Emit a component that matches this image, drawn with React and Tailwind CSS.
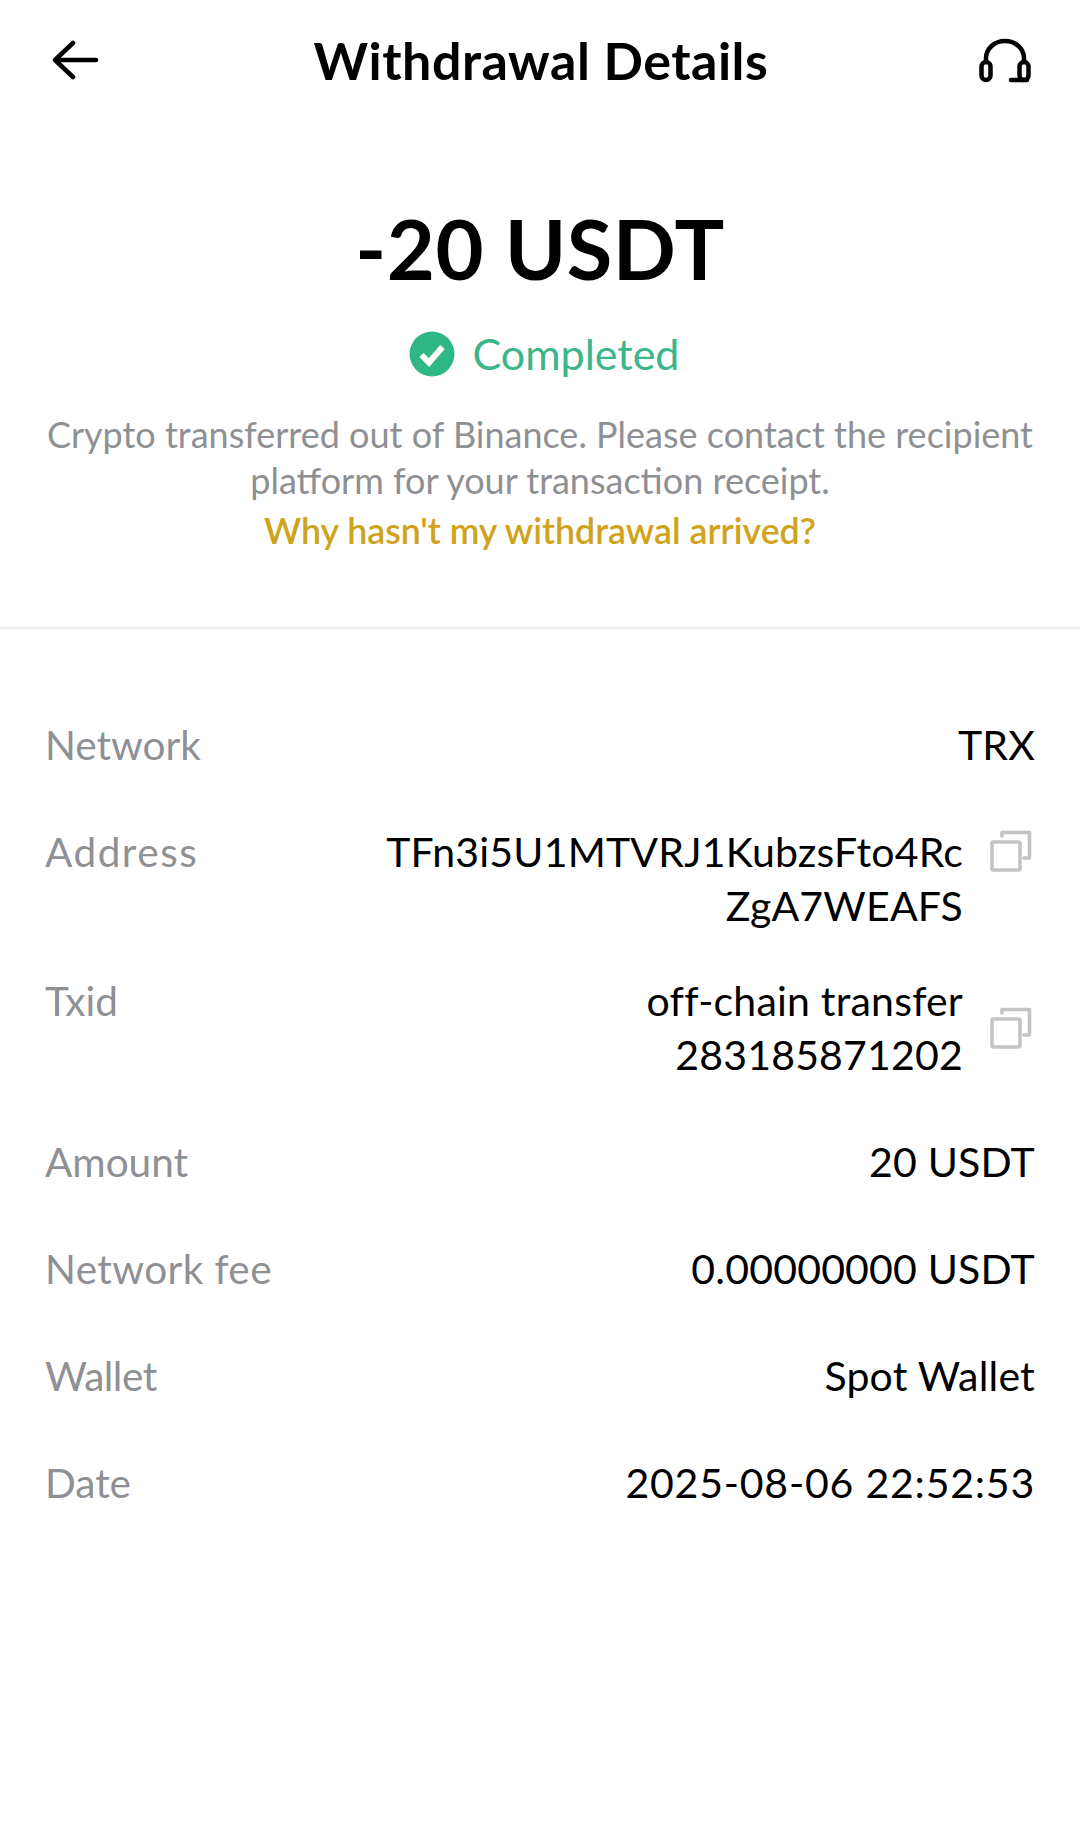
const rows = [
  { label: "Network", lines: ["TRX"] },
  { label: "Address", labelClass: "tracking-[1.5px]", lines: ["TFn3i5U1MTVRJ1KubzsFto4Rc", "ZgA7WEAFS"], copy: true, tight: true },
  { label: "Txid", lines: ["off-chain transfer", "283185871202"], copy: true, center: true },
  { label: "Amount", lines: ["20 USDT"] },
  { label: "Network fee", labelClass: "tracking-[0.4px]", lines: ["0.00000000 USDT"] },
  { label: "Wallet", labelClass: "-tracking-[0.5px]", lines: ["Spot Wallet"] },
  { label: "Date", lines: ["2025-08-06 22:52:53"], valueClass: "tracking-[0.8px]" },
];

const CopyIcon = () => (
  <svg width="42" height="42" viewBox="0 0 42 42" fill="none" stroke="#c4c4c4" strokeWidth="3.6" strokeLinejoin="round" strokeLinecap="round">
    <rect x="2" y="12" width="28" height="28" rx="1.5" />
    <path d="M12 6V2.5h27.5V28H34" />
  </svg>
);

const App = () => {
  return (
    <div className="w-[1080px] h-[1825px] bg-white text-black font-['Lato','Liberation_Sans',sans-serif]">
      {/* Header */}
      <div className="h-[120px] pl-[51px] pr-[49px] flex items-center justify-between">
        <div className="w-[60px]">
          <svg width="48" height="40" viewBox="0 0 48 40" fill="none" stroke="#000" strokeWidth="4.5" strokeLinecap="round" strokeLinejoin="round">
            <path d="M45 20H5M22 3 4 20 22 37" />
          </svg>
        </div>
        <div className="text-[52px] font-bold tracking-[0.5px]">Withdrawal Details</div>
        <div className="w-[60px] flex justify-end">
          <svg width="52" height="46" viewBox="0 0 52 46" fill="none" stroke="#000" strokeWidth="4.5" strokeLinecap="round" strokeLinejoin="round">
            <path d="M7 25V21a19 17 0 0 1 38 0v4" />
            <rect x="2.5" y="25" width="9" height="18" rx="4.5" />
            <rect x="40.5" y="25" width="9" height="18" rx="4.5" />
            <path d="M32 43h16" />
          </svg>
        </div>
      </div>

      {/* Summary */}
      <div className="h-[509px] border-b-2 border-[#ececec] flex flex-col items-center pt-[83px] text-center">
        <div className="text-[83px] leading-[90px] font-bold tracking-[0.5px]">-20 USDT</div>
        <div className="mt-[34px] ml-[8px] flex items-center gap-[18px] text-[43px] leading-[54px] text-[#3cb58a]">
          <svg width="46" height="46" viewBox="0 0 46 46">
            <circle cx="23" cy="23" r="22.5" fill="#2fb886" />
            <path d="M12.5 24l7.5 7.5L33.5 16" fill="none" stroke="#fff" strokeWidth="6" />
          </svg>
          Completed
        </div>
        <div className="mt-[30px] text-[36px] leading-[46px] text-[#8f9094]">
          <p>Crypto transferred out of Binance. Please contact the recipient</p>
          <p>platform for your transaction receipt.</p>
        </div>
        <a className="mt-[3px] text-[35.7px] leading-[50px] font-semibold text-[#cfa31c]">Why hasn't my withdrawal arrived?</a>
      </div>

      {/* Details */}
      <div className="px-[45px] pt-[89px] flex flex-col gap-[53px] leading-[54px]">
        {rows.map((row) => (
          <div key={row.label} className={row.tight ? "flex justify-between -mb-[12px]" : "flex justify-between"}>
            <div className={`text-[40.5px] text-[#8f9094] ${row.labelClass || ""}`}>{row.label}</div>
            <div className={`flex items-start gap-[27px] text-[41px] ${row.valueClass || "tracking-[0.2px]"}`}>
              <div className="text-right">
                {row.lines.map((line) => (
                  <div key={line}>{line}</div>
                ))}
              </div>
              {row.copy && (
                <div className={row.center ? "mt-[33px] mr-[3px]" : "mt-[5px] mr-[3px]"}>
                  <CopyIcon />
                </div>
              )}
            </div>
          </div>
        ))}
      </div>
    </div>
  );
};

export default App;
